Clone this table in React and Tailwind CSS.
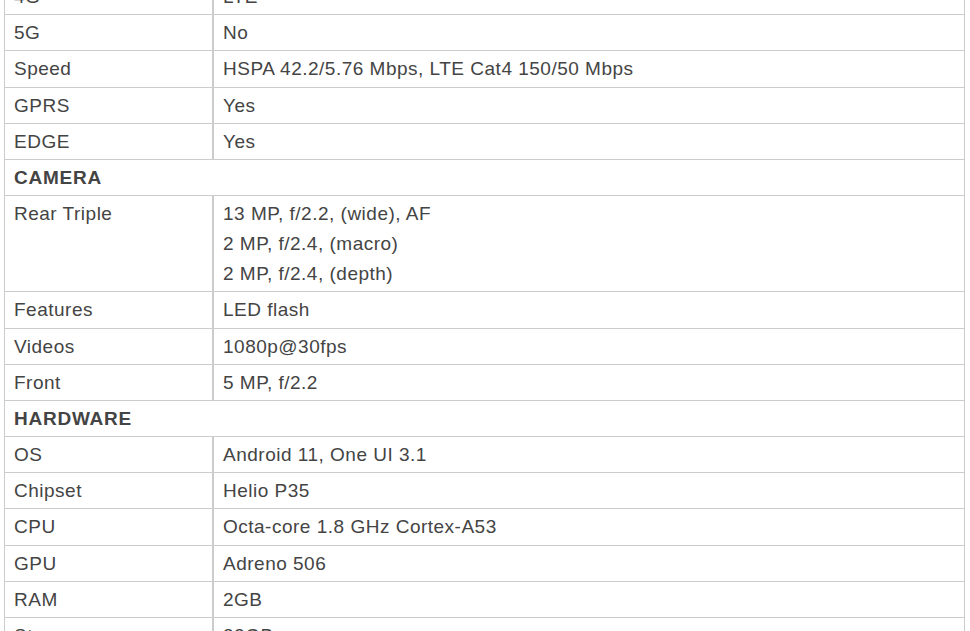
const SPECS = [
    { label: "4G", value: ["LTE"] },
    { label: "5G", value: ["No"] },
    { label: "Speed", value: ["HSPA 42.2/5.76 Mbps, LTE Cat4 150/50 Mbps"] },
    { label: "GPRS", value: ["Yes"] },
    { label: "EDGE", value: ["Yes"] },
    { heading: "CAMERA" },
    {
        label: "Rear Triple",
        value: ["13 MP, f/2.2, (wide), AF", "2 MP, f/2.4, (macro)", "2 MP, f/2.4, (depth)"],
    },
    { label: "Features", value: ["LED flash"] },
    { label: "Videos", value: ["1080p@30fps"] },
    { label: "Front", value: ["5 MP, f/2.2"] },
    { heading: "HARDWARE" },
    { label: "OS", value: ["Android 11, One UI 3.1"] },
    { label: "Chipset", value: ["Helio P35"] },
    { label: "CPU", value: ["Octa-core 1.8 GHz Cortex-A53"] },
    { label: "GPU", value: ["Adreno 506"] },
    { label: "RAM", value: ["2GB"] },
    { label: "Storage", value: ["32GB"] },
    { label: "Card Slot", value: ["microSDXC"] },
];

function SpecRow({ row }) {
    if (row.heading) {
        return (
            <div className="border-b border-[#cccccc] pl-[9px] pt-[3px] pb-[2.2px] font-bold tracking-[0.75px]">
                {row.heading}
            </div>
        );
    }
    return (
        <div className="flex border-b border-[#cccccc]">
            <div className="w-[209px] shrink-0 border-r-2 border-[#cccccc] pl-[9px] pt-[3px] pb-[2.2px]">
                {row.label}
            </div>
            <div className="flex-1 pl-[9px] pt-[3px] pb-[2.2px]">
                {row.value.map((line) => (
                    <div key={line}>{line}</div>
                ))}
            </div>
        </div>
    );
}

export default function App() {
    return (
        <div className="h-[631px] overflow-hidden bg-white">
            <div
                className="ml-[4px] mt-[-21px] w-[961px] border-x border-[#cccccc] text-[19px] leading-[30px] tracking-[0.5px] text-[#444444]"
                style={{ fontFamily: '"Liberation Sans", Arial, sans-serif' }}
            >
                {SPECS.map((row, i) => (
                    <SpecRow key={i} row={row} />
                ))}
            </div>
        </div>
    );
}
